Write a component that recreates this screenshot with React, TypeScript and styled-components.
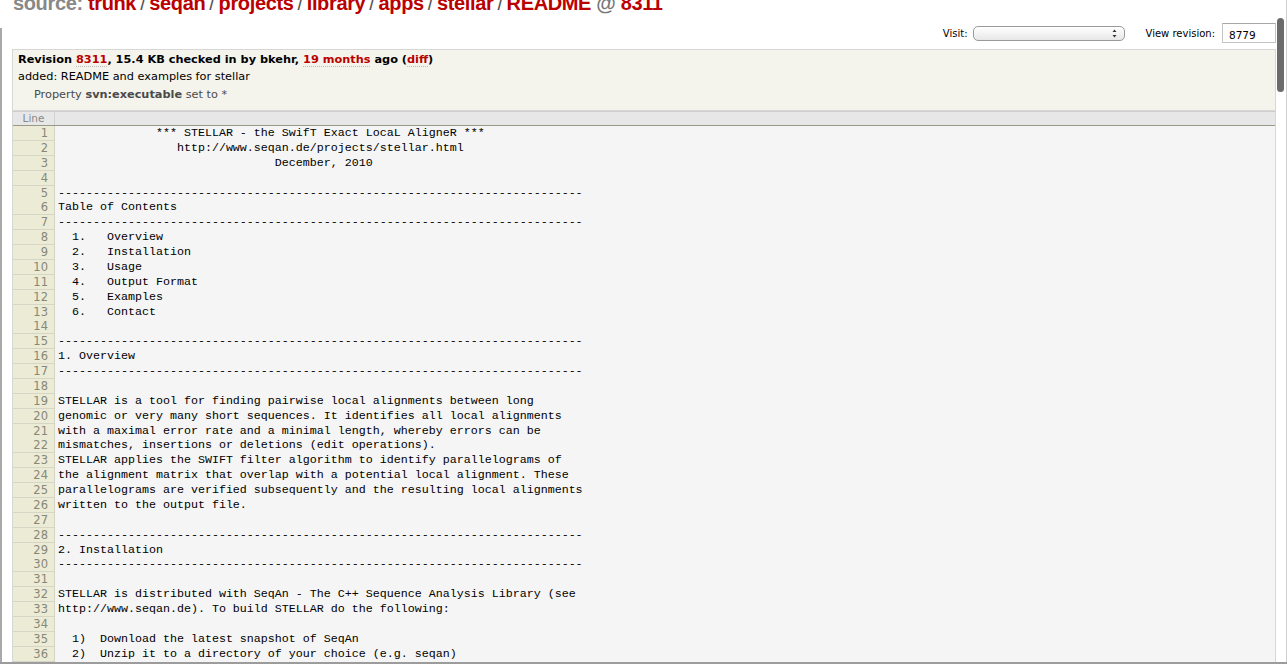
import React from "react";
import styled, { createGlobalStyle } from "styled-components";

const GlobalStyle = createGlobalStyle`
  html, body { margin: 0; padding: 0; background: #fff; overflow: hidden; }
  body { font-family: "DejaVu Sans", Verdana, sans-serif; }
`;

const Screen = styled.div`
  position: relative;
  width: 1287px;
  height: 664px;
  overflow: hidden;
  background: #fff;
`;

const Page = styled.div`
  width: 1276px;
  box-sizing: border-box;
  padding-left: 12px;
  display: flex;
  flex-direction: column;
`;

const Title = styled.h1`
  margin: -9px 0 0 1px;
  font-family: "Liberation Sans", Arial, sans-serif;
  font-weight: bold;
  font-size: 20px;
  line-height: 24px;
  letter-spacing: -0.018em;
  color: #888;
  white-space: nowrap;
`;

const PathLink = styled.a`
  color: #b00;
  text-decoration: none;
`;

const Sep = styled.span`
  color: #555;
  font-weight: normal;
  padding: 0 0.2em;
`;

const At = styled.span`
  color: #777;
`;

const NavRow = styled.div`
  display: flex;
  justify-content: flex-end;
  align-items: center;
  height: 20px;
  margin-top: 8px;
  font-size: 10px;
  color: #000;
`;

const Label = styled.label<{ $gap: number }>`
  font-family: "DejaVu Sans", Verdana, sans-serif;
  font-size: 10px;
  margin-right: ${(p) => p.$gap}px;
`;

const PopUp = styled.div`
  width: 152px;
  height: 15px;
  box-sizing: border-box;
  border: 1px solid #9a9a9a;
  border-radius: 5px;
  background: linear-gradient(#ffffff, #f1f1f1 60%, #e6e6e6);
  display: flex;
  justify-content: flex-end;
  align-items: center;
  padding-right: 7px;
  margin-right: 21px;
`;

const RevInput = styled.div`
  width: 54px;
  height: 20px;
  box-sizing: border-box;
  border: 1px solid #c4c4c4;
  border-top-color: #a8a8a8;
  background: #fff;
  font-family: "DejaVu Sans", Verdana, sans-serif;
  font-size: 10.5px;
  line-height: 20px;
  padding-left: 6px;
  padding-top: 1px;
`;

const InfoBox = styled.div`
  margin-top: 6px;
  border: 1px solid #d7d7d7;
  background: #f4f4ec;
  padding: 0 5px 6px 5px;
  font-family: "DejaVu Sans", Verdana, sans-serif;
  font-size: 11.3px;
  line-height: 18px;
  color: #000;
`;

const InfoLine = styled.div`
  white-space: nowrap;
`;

const Strong = styled.div`
  font-weight: bold;
  white-space: nowrap;
  padding-top: 1px;
  margin-bottom: -1px;
`;

const InfoLink = styled.a`
  color: #b00;
  text-decoration: none;
  border-bottom: 1px dotted #bbb;
`;

const Props = styled.div`
  margin-left: 16px;
  color: #4a4a4a;
  white-space: nowrap;
`;

const PropName = styled.b`
  color: #4a4a4a;
`;

const CodeTable = styled.div`
  border-left: 1px solid #d7d7d7;
  border-right: 1px solid #d7d7d7;
  border-top: 1px solid #cfcfcf;
  background: #f5f5f5;
  display: flex;
  flex-direction: column;
`;

const HeadRow = styled.div`
  display: grid;
  grid-template-columns: 42px 1fr;
  height: 14px;
  box-sizing: border-box;
  background: #e7e7e7;
  border-bottom: 1px solid #99998a;
`;

const HeadCell = styled.div`
  border-right: 1px solid #d2d2d2;
  text-align: center;
  font-family: "DejaVu Sans", Verdana, sans-serif;
  font-size: 10.5px;
  line-height: 13px;
  color: #8a8a8a;
`;

const Row = styled.div`
  display: grid;
  grid-template-columns: 42px 1fr;
  height: 14.886px;
`;

const LineNo = styled.div`
  box-sizing: border-box;
  background: #ecebd6;
  border-right: 1px solid #d4d4c4;
  border-bottom: 1px solid #d6d6c6;
  text-align: right;
  padding-right: 6px;
  font-family: "DejaVu Sans", Verdana, sans-serif;
  font-size: 11.5px;
  line-height: 14px;
  color: #887;
`;

const CodeCell = styled.div`
  padding: 1px 0 0 3px;
  font-family: "Liberation Mono", "Courier New", monospace;
  font-size: 11.67px;
  line-height: 13.886px;
  white-space: pre;
  color: #000;
  overflow: hidden;
`;

const EdgeLeft = styled.div`
  position: absolute;
  left: 0;
  top: 28px;
  bottom: 0;
  width: 2px;
  background: #a9a9a9;
`;

const EdgeBottom = styled.div`
  position: absolute;
  left: 0;
  right: 0;
  bottom: 0;
  height: 2px;
  background: #9c9c9c;
`;

const ScrollTrack = styled.div`
  position: absolute;
  top: 0;
  right: 0;
  bottom: 2px;
  width: 11px;
  background: #fff;
  border-right: 1px solid #cfcfcf;
  box-sizing: border-box;
`;

const Thumb = styled.div`
  position: absolute;
  top: 18px;
  left: 1px;
  width: 7px;
  height: 74px;
  border-radius: 4px;
  background: #6b6b6b;
`;

const dash = "-".repeat(75);

const lines: string[] = [
  "              *** STELLAR - the SwifT Exact LocaL AligneR ***",
  "                 http://www.seqan.de/projects/stellar.html",
  "                               December, 2010",
  "",
  dash,
  "Table of Contents",
  dash,
  "  1.   Overview",
  "  2.   Installation",
  "  3.   Usage",
  "  4.   Output Format",
  "  5.   Examples",
  "  6.   Contact",
  "",
  dash,
  "1. Overview",
  dash,
  "",
  "STELLAR is a tool for finding pairwise local alignments between long",
  "genomic or very many short sequences. It identifies all local alignments",
  "with a maximal error rate and a minimal length, whereby errors can be",
  "mismatches, insertions or deletions (edit operations).",
  "STELLAR applies the SWIFT filter algorithm to identify parallelograms of",
  "the alignment matrix that overlap with a potential local alignment. These",
  "parallelograms are verified subsequently and the resulting local alignments",
  "written to the output file.",
  "",
  dash,
  "2. Installation",
  dash,
  "",
  "STELLAR is distributed with SeqAn - The C++ Sequence Analysis Library (see",
  "http://www.seqan.de). To build STELLAR do the following:",
  "",
  "  1)  Download the latest snapshot of SeqAn",
  "  2)  Unzip it to a directory of your choice (e.g. seqan)",
];

const crumbs = ["trunk", "seqan", "projects", "library", "apps", "stellar", "README"];

const Arrows = () => (
  <svg width="5" height="9" viewBox="0 0 5 9">
    <path d="M2.5 0.5 L4.5 3 L0.5 3 Z" fill="#333" />
    <path d="M0.5 6 L4.5 6 L2.5 8.5 Z" fill="#333" />
  </svg>
);

export default function App() {
  return (
    <Screen>
      <GlobalStyle />
      <Page>
        <Title>
          source:{" "}
          {crumbs.map((c, i) => (
            <React.Fragment key={c}>
              <PathLink href="#">{c}</PathLink>
              {i < crumbs.length - 1 ? <Sep>/</Sep> : null}
            </React.Fragment>
          ))}{" "}
          <At>@</At> <PathLink href="#">8311</PathLink>
        </Title>
        <NavRow>
          <Label $gap={5}>Visit:</Label>
          <PopUp>
            <Arrows />
          </PopUp>
          <Label $gap={7}>View revision:</Label>
          <RevInput>8779</RevInput>
        </NavRow>
        <InfoBox>
          <Strong>
            Revision <InfoLink href="#">8311</InfoLink>, 15.4 KB checked in by bkehr,{" "}
            <InfoLink href="#">19 months</InfoLink> ago (<InfoLink href="#">diff</InfoLink>)
          </Strong>
          <InfoLine>added: README and examples for stellar</InfoLine>
          <Props>
            Property <PropName>svn:executable</PropName> set to *
          </Props>
        </InfoBox>
        <CodeTable>
          <HeadRow>
            <HeadCell>Line</HeadCell>
            <div />
          </HeadRow>
          {lines.map((l, i) => (
            <Row key={i}>
              <LineNo>{i + 1}</LineNo>
              <CodeCell>{l}</CodeCell>
            </Row>
          ))}
        </CodeTable>
      </Page>
      <EdgeLeft />
      <EdgeBottom />
      <ScrollTrack>
        <Thumb />
      </ScrollTrack>
    </Screen>
  );
}
